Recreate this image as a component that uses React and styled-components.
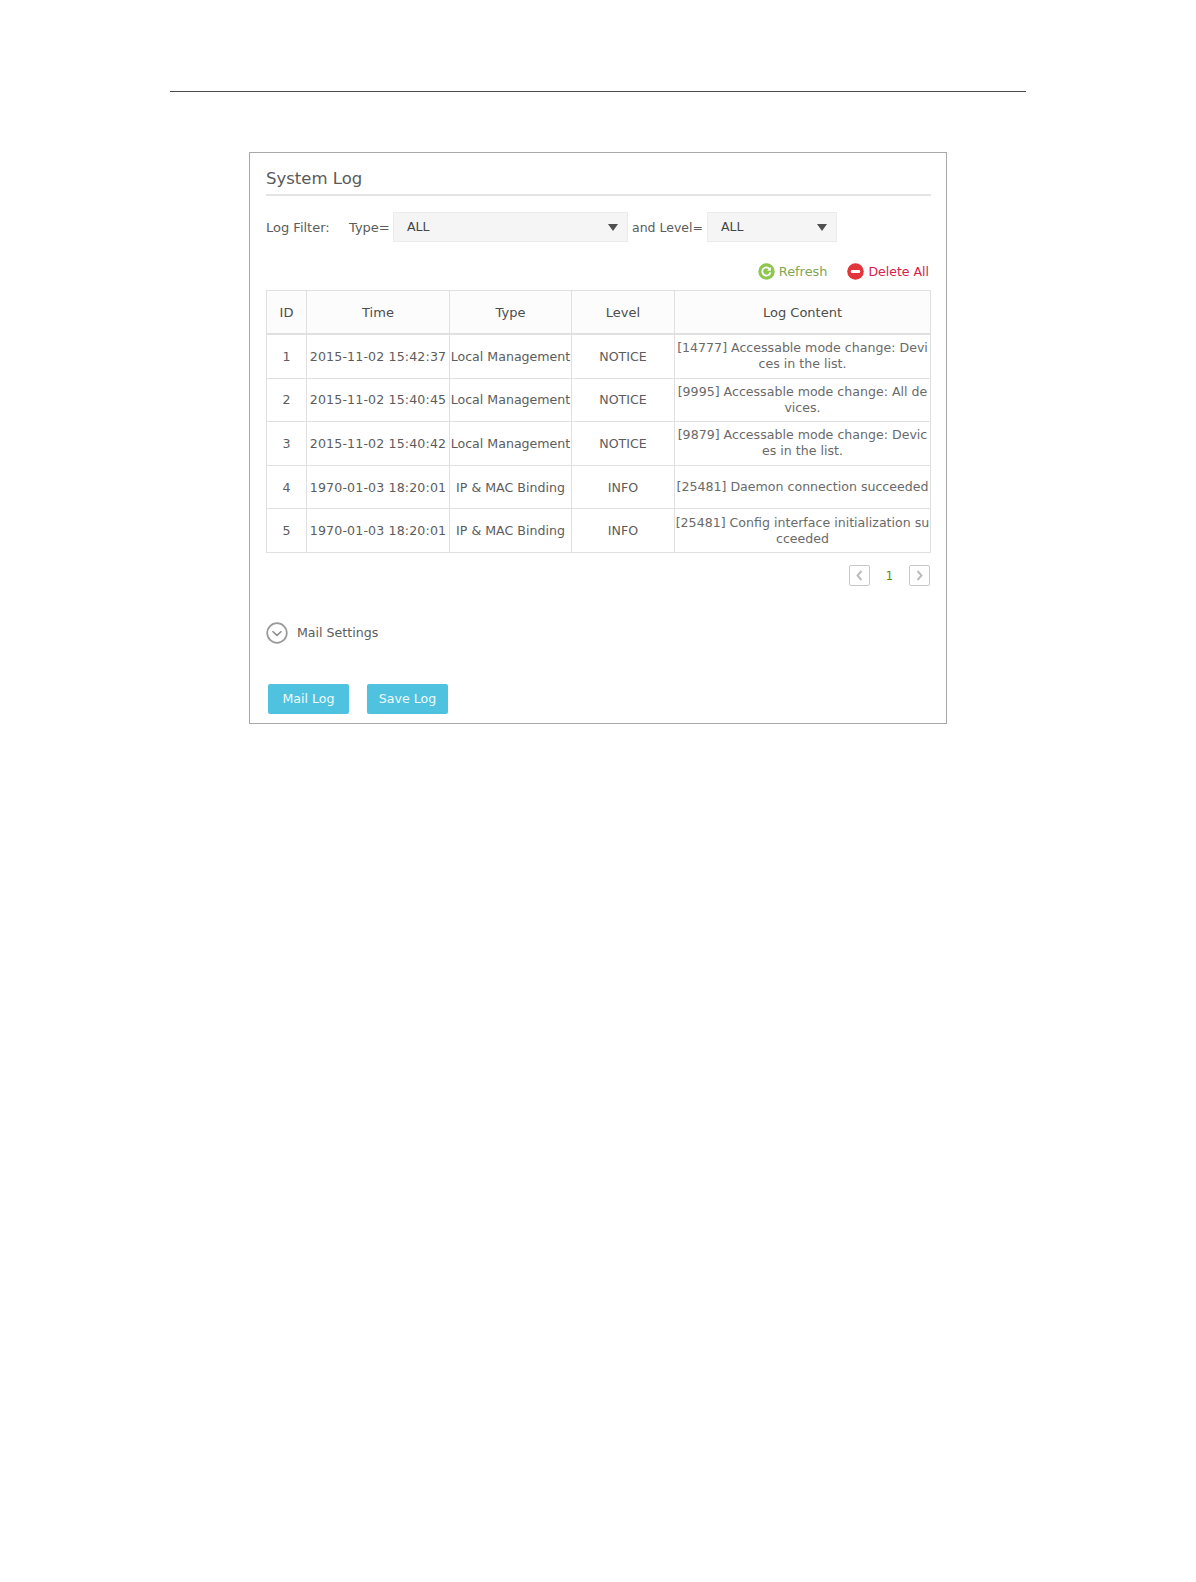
import React from "react";
import styled, { createGlobalStyle } from "styled-components";

const rows = [
  { id: 1, time: "2015-11-02 15:42:37", type: "Local Management", level: "NOTICE", content: ["[14777] Accessable mode change: Devi", "ces in the list."] },
  { id: 2, time: "2015-11-02 15:40:45", type: "Local Management", level: "NOTICE", content: ["[9995] Accessable mode change: All de", "vices."] },
  { id: 3, time: "2015-11-02 15:40:42", type: "Local Management", level: "NOTICE", content: ["[9879] Accessable mode change: Devic", "es in the list."] },
  { id: 4, time: "1970-01-03 18:20:01", type: "IP & MAC Binding", level: "INFO", content: ["[25481] Daemon connection succeeded"] },
  { id: 5, time: "1970-01-03 18:20:01", type: "IP & MAC Binding", level: "INFO", content: ["[25481] Config interface initialization su", "cceeded"] },
];

export default function App() {
  return (
    <Page>
      <GlobalStyle />
      <TopRule />
      <Panel>
        <Title>System Log</Title>
        <FilterRow>
          <FilterLabel>Log Filter:</FilterLabel>
          <TypeLabel>Type=</TypeLabel>
          <Select $width={235}>
            ALL
            <Caret />
          </Select>
          <AndLabel>and Level=</AndLabel>
          <Select $width={130}>
            ALL
            <Caret />
          </Select>
        </FilterRow>
        <Actions>
          <Action $color="#7fa650" $size={12.9}>
            <svg width="17" height="17" viewBox="0 0 17 17">
              <circle cx="8.5" cy="8.5" r="8.2" fill="#8fc64f" />
              <path d="M11.8 6.2a4.1 4.1 0 1 0 .6 3.2" fill="none" stroke="#fff" strokeWidth="1.8" />
              <path d="M12.9 3.9v3.9H9z" fill="#fff" />
            </svg>
            Refresh
          </Action>
          <Action $color="#d9204a" $size={12.5}>
            <svg width="17" height="17" viewBox="0 0 17 17">
              <circle cx="8.5" cy="8.5" r="8.3" fill="#e0363c" />
              <rect x="3.8" y="7" width="9.4" height="3" rx="1.2" fill="#fff" />
            </svg>
            Delete All
          </Action>
        </Actions>
        <LogTable>
          <colgroup>
            <col width="40" />
            <col width="143" />
            <col width="122" />
            <col width="103" />
            <col width="256" />
          </colgroup>
          <thead>
            <tr>
              <Head>ID</Head>
              <Head>Time</Head>
              <Head>Type</Head>
              <Head>Level</Head>
              <Head>Log Content</Head>
            </tr>
          </thead>
          <tbody>
            {rows.map((row) => (
              <tr key={row.id}>
                <Cell>{row.id}</Cell>
                <TimeCell>{row.time}</TimeCell>
                <Cell>{row.type}</Cell>
                <Cell>{row.level}</Cell>
                <ContentCell>
                  {row.content.map((line) => (
                    <div key={line}>{line}</div>
                  ))}
                </ContentCell>
              </tr>
            ))}
          </tbody>
        </LogTable>
        <Pager>
          <PageButton>
            <svg width="9" height="11" viewBox="0 0 9 11">
              <path d="M6.5 1 2.5 5.5l4 4.5" fill="none" stroke="#bbb" strokeWidth="1.9" />
            </svg>
          </PageButton>
          <PageNumber>1</PageNumber>
          <PageButton>
            <svg width="9" height="11" viewBox="0 0 9 11">
              <path d="M2.5 1l4 4.5-4 4.5" fill="none" stroke="#bbb" strokeWidth="1.9" />
            </svg>
          </PageButton>
        </Pager>
        <MailToggle>
          <svg width="22" height="22" viewBox="0 0 22 22">
            <circle cx="11" cy="11" r="9.8" fill="none" stroke="#9a9a9a" strokeWidth="1.7" />
            <path d="M6.5 9.2 11 13.4l4.5-4.2" fill="none" stroke="#8c8c8c" strokeWidth="1.5" />
          </svg>
          Mail Settings
        </MailToggle>
        <Buttons>
          <Button>Mail Log</Button>
          <Button>Save Log</Button>
        </Buttons>
      </Panel>
    </Page>
  );
}

/* Styled Components */
const GlobalStyle = createGlobalStyle`
  body {
    margin: 0;
    background: #fff;
    font-family: "DejaVu Sans", Verdana, sans-serif;
    font-size: 12.6px;
    color: #5c5c5c;
  }
`;

const Page = styled.div`
  width: 1196px;
  height: 1582px;
  padding: 91px 0 0 170px;
  box-sizing: border-box;
  overflow: hidden;
`;

const TopRule = styled.div`
  width: 856px;
  height: 1px;
  background: #4a4a4a;
`;

const Panel = styled.div`
  width: 698px;
  height: 572px;
  box-sizing: border-box;
  margin: 60px 0 0 79px;
  padding: 0 15px 0 16px;
  border: 1px solid #a8a8a8;
`;

const Title = styled.div`
  height: 41px;
  width: 665px;
  line-height: 51px;
  font-size: 16.5px;
  color: #5a5a5a;
  border-bottom: 2px solid #e4e4e4;
`;

const FilterRow = styled.div`
  display: flex;
  align-items: center;
  height: 30px;
  margin-top: 16px;
  font-size: 13px;
`;

const FilterLabel = styled.span`
  width: 83px;
`;

const TypeLabel = styled.span`
  width: 44px;
`;

const AndLabel = styled.span`
  width: 79px;
  padding-left: 4px;
  box-sizing: border-box;
  font-size: 12.5px;
`;

const Select = styled.div`
  position: relative;
  width: ${(p) => p.$width}px;
  height: 30px;
  box-sizing: border-box;
  padding-left: 13px;
  line-height: 28px;
  font-size: 12.5px;
  background: #f5f5f5;
  border: 1px solid #ececec;
  color: #444;
`;

const Caret = styled.span`
  position: absolute;
  right: 9px;
  top: 11px;
  border-left: 5.5px solid transparent;
  border-right: 5.5px solid transparent;
  border-top: 7px solid #4f4f4f;
`;

const Actions = styled.div`
  display: flex;
  justify-content: flex-end;
  gap: 20px;
  height: 48px;
  padding: 21px 2px 0 0;
  box-sizing: border-box;
`;

const Action = styled.span`
  display: inline-flex;
  align-items: center;
  gap: 4px;
  height: 17px;
  font-size: ${(p) => p.$size}px;
  color: ${(p) => p.$color};
`;

const LogTable = styled.table`
  width: 664px;
  table-layout: fixed;
  border-collapse: collapse;
`;

const Head = styled.th`
  height: 42px;
  padding: 0;
  font-size: 13px;
  font-weight: 400;
  color: #4c4c4c;
  background: #fcfcfc;
  border: 1px solid #e0e0e0;
  border-bottom-width: 2px;
`;

const Cell = styled.td`
  height: 42.6px;
  padding: 0;
  text-align: center;
  white-space: nowrap;
  border: 1px solid #e0e0e0;
`;

const TimeCell = styled(Cell)`
  letter-spacing: 0.14px;
`;

const ContentCell = styled(Cell)`
  line-height: 16px;
  color: #6a6a6a;
`;

const Pager = styled.div`
  display: flex;
  justify-content: flex-end;
  align-items: center;
  height: 22px;
  margin-top: 12px;
  padding-right: 1px;
`;

const PageButton = styled.span`
  display: flex;
  align-items: center;
  justify-content: center;
  width: 21px;
  height: 21px;
  box-sizing: border-box;
  border: 1px solid #c9c9c9;
  border-radius: 2px;
`;

const PageNumber = styled.span`
  width: 39px;
  text-align: center;
  font-size: 11.5px;
  color: #5a8a10;
`;

const MailToggle = styled.div`
  display: flex;
  align-items: center;
  gap: 9px;
  height: 22px;
  margin-top: 35px;
`;

const Buttons = styled.div`
  display: flex;
  gap: 18px;
  margin: 40px 0 0 2px;
`;

const Button = styled.button`
  width: 81px;
  height: 30px;
  padding: 0;
  border: 0;
  border-radius: 2px;
  background: #4fc2e0;
  color: #f0fafd;
  font: inherit;
`;
